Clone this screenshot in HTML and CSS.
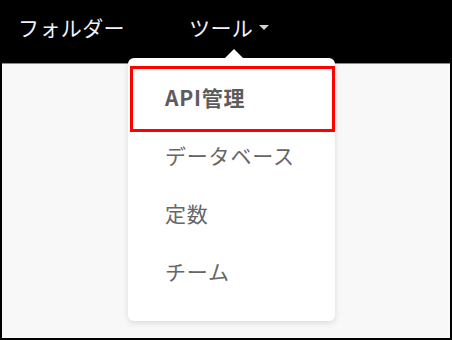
FILE: index.html
```html
<!DOCTYPE html>
<html lang="ja">
<head>
<meta charset="utf-8">
<link rel="stylesheet" href="styles.css">
</head>
<body>
<div class="frame">
  <nav class="nav">
    <span class="nav-item">フォルダー</span>
    <span class="nav-item nav-tools">ツール<span class="caret"></span></span>
  </nav>
  <div class="menu">
    <span class="menu-arrow"></span>
    <ul class="menu-list">
      <li class="menu-item menu-item-active">API管理</li>
      <li class="menu-item">データベース</li>
      <li class="menu-item">定数</li>
      <li class="menu-item">チーム</li>
    </ul>
  </div>
  <div class="highlight"></div>
</div>
</body>
</html>
```
FILE: styles.css
```css
html, body {
  margin: 0;
  padding: 0;
  background: #000;
}
.frame {
  position: relative;
  width: 452px;
  height: 340px;
  box-sizing: border-box;
  border: 2px solid #000;
  background: #f8f8f8;
  font-family: "Noto Sans CJK JP", "Noto Sans", sans-serif;
}
.nav {
  height: 62px;
  box-sizing: border-box;
  background: #000;
  border-bottom: 1px solid #8a8a8a;
  display: flex;
  align-items: flex-start;
  padding: 13px 0 0 16px;
  gap: 64px;
}
.nav-item {
  color: #eef0fa;
  font-size: 21px;
  line-height: 24px;
  letter-spacing: 0.4px;
  display: flex;
  align-items: center;
}
.caret {
  display: inline-block;
  width: 0;
  height: 0;
  margin-left: 6px;
  margin-top: 1px;
  border-left: 5px solid transparent;
  border-right: 5px solid transparent;
  border-top: 5px solid #d0d0d8;
}
.menu {
  position: absolute;
  left: 126px;
  top: 56px;
  width: 207px;
  height: 263px;
  background: #fff;
  border-radius: 6px;
  box-shadow: 0 2px 6px rgba(0, 0, 0, 0.12);
}
.menu-arrow {
  position: absolute;
  left: 96px;
  top: -9px;
  width: 0;
  height: 0;
  border-left: 10px solid transparent;
  border-right: 10px solid transparent;
  border-bottom: 10px solid #fff;
}
.menu-list {
  list-style: none;
  margin: 0;
  padding: 10px 0 0 0;
}
.menu-item {
  height: 58px;
  line-height: 58px;
  padding-left: 37px;
  font-size: 21px;
  letter-spacing: 0.8px;
  color: #666;
}
.menu-item-active {
  font-weight: bold;
  color: #5c5c5c;
}
.highlight {
  position: absolute;
  left: 128px;
  top: 64px;
  width: 205px;
  height: 66px;
  box-sizing: border-box;
  border: 3px solid #ff0000;
}
```
